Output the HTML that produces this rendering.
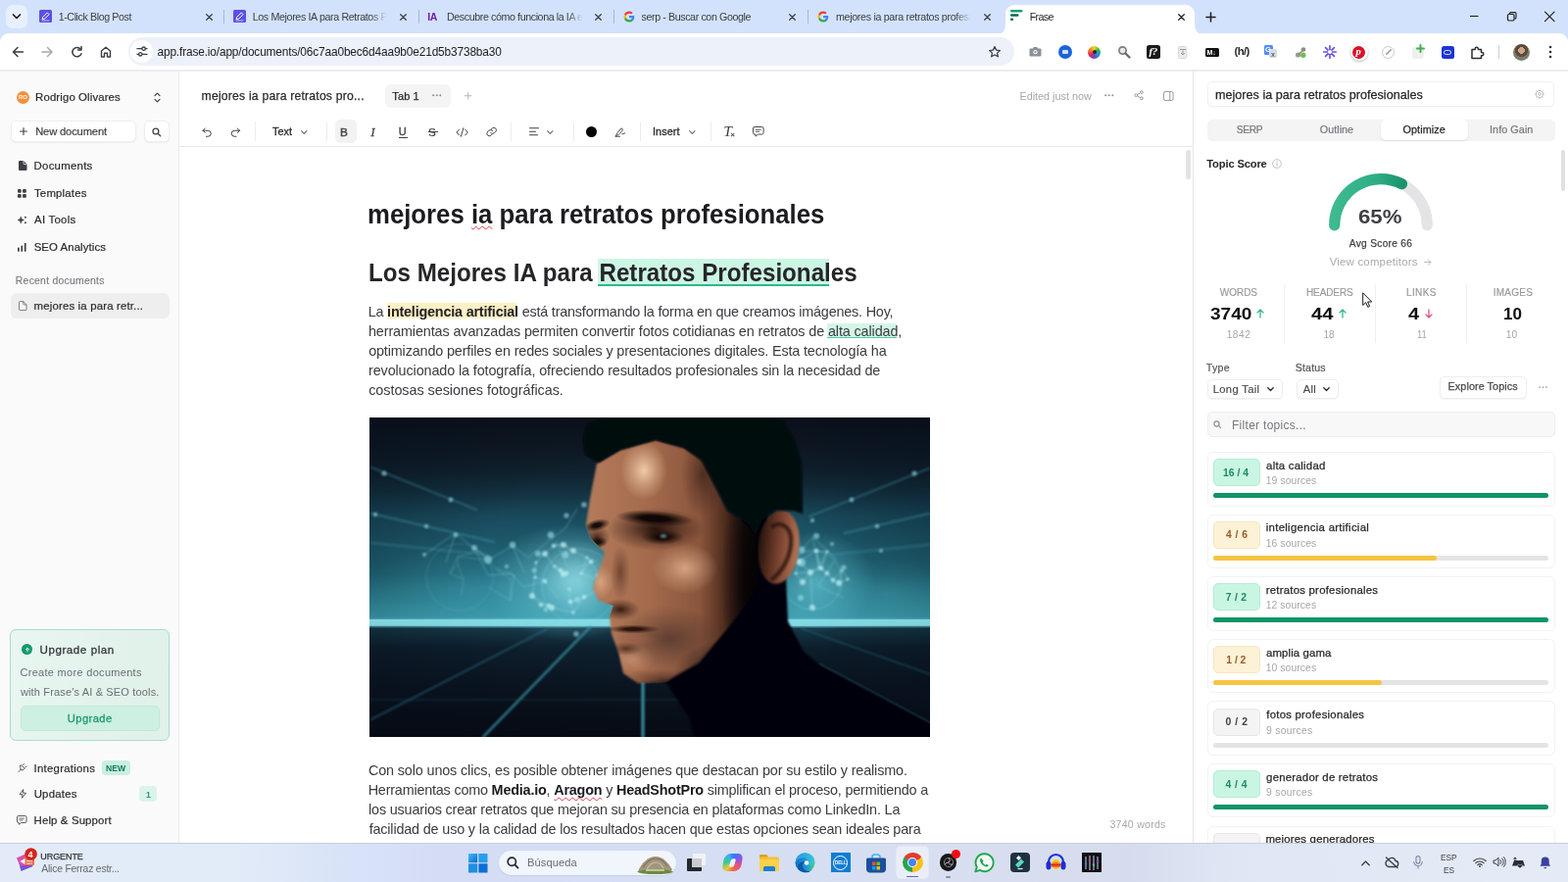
<!DOCTYPE html>
<html lang="es">
<head>
<meta charset="utf-8">
<title>Frase</title>
<style>

*{box-sizing:border-box;margin:0;padding:0}
html,body{width:1600px;height:900px;overflow:hidden;background:#fff}
body{font-family:"Liberation Sans",sans-serif;color:#27272a;position:relative}
#w{position:absolute;left:0;top:0;width:1600px;height:900px;overflow:hidden;will-change:transform;background:#fff}
.a{position:absolute}
.t{position:absolute;white-space:nowrap;line-height:1}
svg{position:absolute;overflow:visible}
b{font-weight:700}
/* browser chrome */
#tabstrip{left:0;top:0;width:1600px;height:46px;background:#d3e2fc}
#toolbar{left:0;top:34px;width:1600px;height:38px;background:#fff;border-radius:9px 9px 0 0}
#chromeline{left:0;top:71px;width:1600px;height:2px;background:#ededf0}
#omni{left:131px;top:38px;width:904px;height:29px;border-radius:15px;background:#edf1fa}
#acttab{left:1026px;top:5px;width:193px;height:30px;background:#fff;border-radius:9px 9px 0 0}
.tsep{position:absolute;width:1px;height:14px;top:10px;background:#a8b6d2}
.ext{position:absolute;width:14px;height:14px;top:46px;border-radius:3px}
/* app */
#sidebar{left:0;top:73px;width:183px;height:787px;background:#fafafa}
#sideline{left:182px;top:73px;width:1px;height:787px;background:#ececed}
#panelline{left:1217px;top:73px;width:1px;height:787px;background:#e6e6e8}
.btn{position:absolute;background:#fff;border:1px solid #eeeef0;border-radius:5px;box-shadow:0 1px 1.5px rgba(0,0,0,.05)}
.vsep{position:absolute;width:1px;background:#ededee}
.hl-g{background:#ccf6e4;box-shadow:inset 0 -2px 0 #2db88c}
.hl-g1{background:#d3f6e7;box-shadow:inset 0 -1px 0 #55c7a0}
.hl-y{background:#fdf0c5}
.sq{text-decoration:underline wavy #e23b4e 1px;text-underline-offset:2px;text-decoration-skip-ink:none}
/* panel */
.card{position:absolute;left:1231.6px;width:355.3px;height:55.6px;border:1px solid #f2f2f3;border-radius:6px;background:#fff}
.badge{position:absolute;left:1238px;width:48px;height:28px;border-radius:5px}
.bg-g{background:#c9f6e2;border:1px solid #b4ebd3}
.bg-y{background:#fdf2d6;border:1px solid #f5e5bd}
.bg-n{background:#f4f4f5;border:1px solid #e6e6e8}
.bar{position:absolute;left:1238px;width:342px;height:5px;border-radius:3px;background:#e4e4e6}
.bar i{position:absolute;left:0;top:0;height:5px;border-radius:3px;display:block}
/* taskbar */
#taskbar{left:0;top:860px;width:1600px;height:40px;background:linear-gradient(90deg,#e3ebf8 0%,#e2ebf8 15%,#d9e3f8 22%,#d4ddf5 28%,#d6def3 45%,#d8dff1 60%,#d6dcee 72%,#e0e7f4 79%,#e5ebf6 100%);border-top:1px solid #c6cede}

</style>
</head>
<body>
<div id="w">
<div id="tabstrip" class="a"></div>
<div id="toolbar" class="a"></div>
<div id="chromeline" class="a"></div>
<div id="acttab" class="a"></div>
<svg class="a" style="left:1016px;top:25px" width="213" height="10" viewBox="0 0 213 10"><path d="M0 10 Q10 10 10 0 V10Z" fill="#fff"/><path d="M213 10 Q203 10 203 0 V10Z" fill="#fff"/></svg>
<div id="omni" class="a"></div>
<div class="a" style="left:6px;top:5px;width:22px;height:24px;border-radius:7px;background:#e8effd"></div>
<svg style="left:12px;top:13px" width="10" height="8" viewBox="0 0 10 8"><path d="M1.5 2l3.5 3.5L8.5 2" fill="none" stroke="#1f1f1f" stroke-width="1.7" stroke-linecap="round" stroke-linejoin="round"/></svg>
<svg style="left:40px;top:10px" width="13" height="13" viewBox="0 0 13 13"><rect width="13" height="13" rx="1.500" fill="#5b50e6"/><path d="M3.200 9.800l.500-2.300 4.600-4.600 1.800 1.800-4.600 4.600z" fill="none" stroke="#fff" stroke-width="1"/><path d="M2.500 11h8" stroke="#cfcaff" stroke-width=".9"/></svg>
<span class="t" style="left:59.70px;top:12px;font-size:10.7px;color:#3a3d44;letter-spacing:-0.416px;">1-Click Blog Post</span>
<svg style="left:209.5px;top:13.5px" width="7" height="7" viewBox="0 0 7 7"><path d="M.7.700l5.600 5.600M6.300.700L.7 6.300" stroke="#3a3d44" stroke-width="1.250" stroke-linecap="round"/></svg>
<div class="tsep" style="left:228px"></div>
<svg style="left:238px;top:10px" width="13" height="13" viewBox="0 0 13 13"><rect width="13" height="13" rx="1.500" fill="#5b50e6"/><path d="M3.200 9.800l.500-2.300 4.600-4.600 1.800 1.800-4.600 4.600z" fill="none" stroke="#fff" stroke-width="1"/><path d="M2.500 11h8" stroke="#cfcaff" stroke-width=".9"/></svg>
<span class="t" style="left:257.69px;top:12px;font-size:10.7px;color:#3a3d44;letter-spacing:-0.364px;-webkit-mask-image:linear-gradient(90deg,#000 88%,transparent 100%);">Los Mejores IA para Retratos P</span>
<svg style="left:407.5px;top:13.5px" width="7" height="7" viewBox="0 0 7 7"><path d="M.7.700l5.600 5.600M6.300.700L.7 6.300" stroke="#3a3d44" stroke-width="1.250" stroke-linecap="round"/></svg>
<div class="tsep" style="left:427px"></div>
<span class="t" style="left:436.33px;top:12px;font-size:10.5px;color:#6a1fb0;letter-spacing:-.6px;"><b>IA</b></span>
<span class="t" style="left:456.00px;top:12px;font-size:10.7px;color:#3a3d44;letter-spacing:-0.410px;-webkit-mask-image:linear-gradient(90deg,#000 88%,transparent 100%);">Descubre cómo funciona la IA e</span>
<svg style="left:606.5px;top:13.5px" width="7" height="7" viewBox="0 0 7 7"><path d="M.7.700l5.600 5.600M6.300.700L.7 6.300" stroke="#3a3d44" stroke-width="1.250" stroke-linecap="round"/></svg>
<div class="tsep" style="left:626px"></div>
<svg style="left:636px;top:11px" width="12" height="12" viewBox="0 0 48 48"><path fill="#4285f4" d="M45.100 24.500c0-1.600-.1-3.100-.4-4.500H24v8.500h11.800c-.5 2.800-2.100 5.100-4.400 6.700v5.500h7.100c4.200-3.800 6.600-9.500 6.600-16.200z"/><path fill="#34a853" d="M24 46c5.900 0 10.900-2 14.500-5.300l-7.100-5.500c-2 1.300-4.500 2.100-7.400 2.100-5.700 0-10.500-3.800-12.300-9H4.400v5.700C8 41.100 15.400 46 24 46z"/><path fill="#fbbc05" d="M11.700 28.300c-.4-1.300-.7-2.800-.7-4.300s.3-2.900.7-4.300V14H4.400C2.900 17 2 20.400 2 24s.9 7 2.400 10z"/><path fill="#ea4335" d="M24 10.700c3.200 0 6.100 1.100 8.400 3.300l6.300-6.300C34.900 4.200 29.900 2 24 2 15.400 2 8 6.900 4.400 14l7.300 5.700c1.800-5.200 6.600-9 12.300-9z"/></svg>
<span class="t" style="left:654.49px;top:12px;font-size:10.7px;color:#3a3d44;letter-spacing:-0.401px;">serp - Buscar con Google</span>
<svg style="left:804.5px;top:13.5px" width="7" height="7" viewBox="0 0 7 7"><path d="M.7.700l5.600 5.600M6.300.700L.7 6.300" stroke="#3a3d44" stroke-width="1.250" stroke-linecap="round"/></svg>
<div class="tsep" style="left:824px"></div>
<svg style="left:834px;top:11px" width="12" height="12" viewBox="0 0 48 48"><path fill="#4285f4" d="M45.100 24.500c0-1.600-.1-3.100-.4-4.500H24v8.500h11.800c-.5 2.800-2.100 5.100-4.400 6.700v5.500h7.100c4.200-3.800 6.600-9.500 6.600-16.200z"/><path fill="#34a853" d="M24 46c5.900 0 10.900-2 14.500-5.300l-7.100-5.500c-2 1.300-4.500 2.100-7.400 2.100-5.700 0-10.500-3.800-12.300-9H4.400v5.700C8 41.100 15.400 46 24 46z"/><path fill="#fbbc05" d="M11.700 28.300c-.4-1.300-.7-2.800-.7-4.300s.3-2.900.7-4.300V14H4.400C2.900 17 2 20.400 2 24s.9 7 2.400 10z"/><path fill="#ea4335" d="M24 10.700c3.200 0 6.100 1.100 8.400 3.300l6.300-6.300C34.900 4.200 29.900 2 24 2 15.400 2 8 6.900 4.400 14l7.300 5.700c1.800-5.200 6.600-9 12.300-9z"/></svg>
<span class="t" style="left:852.95px;top:12px;font-size:10.7px;color:#3a3d44;letter-spacing:-0.317px;-webkit-mask-image:linear-gradient(90deg,#000 88%,transparent 100%);">mejores ia para retratos profesi</span>
<svg style="left:1003.5px;top:13.5px" width="7" height="7" viewBox="0 0 7 7"><path d="M.7.700l5.600 5.600M6.300.700L.7 6.300" stroke="#3a3d44" stroke-width="1.250" stroke-linecap="round"/></svg>
<svg style="left:1031px;top:10px" width="13" height="12" viewBox="0 0 13 12"><rect x="0" y="0" width="12.5" height="2.6" rx="1" fill="#12a06f"/><rect x="0" y="4.2" width="8.5" height="2.6" rx="1" fill="#0d6b4c"/><rect x="0" y="8.6" width="3" height="2.4" rx="1" fill="#0d6b4c"/></svg>
<span class="t" style="left:1050.69px;top:12px;font-size:10.7px;color:#1f1f1f;letter-spacing:-0.659px;">Frase</span>
<svg style="left:1201.5px;top:13.5px" width="7" height="7" viewBox="0 0 7 7"><path d="M.7.700l5.600 5.600M6.300.700L.7 6.300" stroke="#1f1f1f" stroke-width="1.250" stroke-linecap="round"/></svg>
<svg style="left:1229.5px;top:11.5px" width="11" height="11" viewBox="0 0 11 11"><path d="M5.5 1v9M1 5.5h9" stroke="#1f1f1f" stroke-width="1.5" stroke-linecap="round"/></svg>
<svg style="left:1499px;top:11px" width="92" height="12" viewBox="0 0 92 12"><path d="M1 5.5h8.5" stroke="#1f1f1f" stroke-width="1.1"/><rect x="39.5" y="3.5" width="6.5" height="6.5" rx="1.3" fill="none" stroke="#1f1f1f" stroke-width="1.2"/><path d="M41.5 3V2.6a1 1 0 011-1h4.5a1 1 0 011 1v4.5a1 1 0 01-1 1h-.4" fill="none" stroke="#1f1f1f" stroke-width="1.1"/><path d="M77.5 1.2l9.5 9.5M87 1.2l-9.5 9.5" stroke="#1f1f1f" stroke-width="1.2" stroke-linecap="round"/></svg>
<svg style="left:12px;top:46px" width="110" height="14" viewBox="0 0 110 14"><path d="M11.5 7H1.8M6 2.5L1.5 7 6 11.5" fill="none" stroke="#3a3d44" stroke-width="1.5" stroke-linecap="round" stroke-linejoin="round"/><path d="M31 7h9.7M36.5 2.5L41 7l-4.500 4.500" fill="none" stroke="#a5a9b2" stroke-width="1.5" stroke-linecap="round" stroke-linejoin="round"/><path d="M70.3 4.2A4.700 4.700 0 1071 8.800" fill="none" stroke="#3a3d44" stroke-width="1.5" stroke-linecap="round"/><path d="M71 1.5V5h-3.500" fill="none" stroke="#3a3d44" stroke-width="1.5" stroke-linecap="round" stroke-linejoin="round"/><path d="M91.500 12V6L96 2.300 100.500 6v6h-3V8.200h-3V12z" fill="none" stroke="#3a3d44" stroke-width="1.4" stroke-linejoin="round"/></svg>
<div class="a" style="left:133px;top:41px;width:23px;height:23px;border-radius:12px;background:#fff"></div>
<svg style="left:138.500px;top:47px" width="12" height="11" viewBox="0 0 12 11"><path d="M1 2.700h4.500M9.500 2.700H11M1 8.300h1.500M6.500 8.300H11" stroke="#3a3d44" stroke-width="1.300" stroke-linecap="round"/><circle cx="7.600" cy="2.700" r="1.700" fill="none" stroke="#3a3d44" stroke-width="1.300"/><circle cx="4.300" cy="8.300" r="1.700" fill="none" stroke="#3a3d44" stroke-width="1.300"/></svg>
<span class="t" style="left:160.51px;top:48px;font-size:11.9px;color:#202124;letter-spacing:-0.155px;">app.frase.io/app/documents/06c7aa0bec6d4aa9b0e21d5b3738ba30</span>
<svg style="left:1008px;top:45.500px" width="14" height="14" viewBox="0 0 24 24"><path d="M12 2.800l2.800 6 6.500.700-4.900 4.400 1.400 6.400L12 17l-5.800 3.300 1.400-6.400L2.700 9.500l6.500-.700z" fill="none" stroke="#3a3d44" stroke-width="2.100" stroke-linejoin="round"/></svg>
<svg style="left:1050px;top:47px" width="13" height="11" viewBox="0 0 13 11"><path d="M1.500 2.500h2.300l1-1.500h3.400l1 1.500h2.300a1 1 0 011 1V9.500a1 1 0 01-1 1H1.500a1 1 0 01-1-1V3.500a1 1 0 011-1z" fill="#8d9096"/><circle cx="6.500" cy="6.200" r="2.100" fill="#fff"/><circle cx="6.500" cy="6.200" r="1.100" fill="#8d9096"/></svg>
<div class="a" style="left:1079.500px;top:46px;width:14px;height:14px;border-radius:7px;background:#1d63d9"></div><div class="a" style="left:1083.500px;top:51px;width:6px;height:4px;border-radius:1px;background:#cfe0ff"></div>
<div class="a" style="left:1110px;top:46.500px;width:13px;height:13px;border-radius:7px;background:conic-gradient(#f5d21f,#38b24a,#1c9ad6,#7a3fc0,#e0245e,#f0801f,#f5d21f)"></div><div class="a" style="left:1114.500px;top:51px;width:4px;height:4px;border-radius:2px;background:#2a2a2a"></div>
<svg style="left:1140px;top:46px" width="14" height="14" viewBox="0 0 14 14"><circle cx="5.500" cy="5.500" r="3.600" fill="#e9e9e9" stroke="#7d7d7d" stroke-width="1.700"/><path d="M8.500 8.500l4 4" stroke="#6a6a6a" stroke-width="2.300" stroke-linecap="round"/></svg>
<div class="a" style="left:1170px;top:46px;width:14px;height:14px;border-radius:2.500px;background:#1b1b1b"></div>
<span class="t" style="left:1172.500px;top:47px;font-size:11px;color:#fff;font-style:italic;font-weight:700;font-family:'Liberation Serif',serif;letter-spacing:-.5px">f?</span>
<div class="a" style="left:1202px;top:46.500px;width:9px;height:13px;border-radius:1.500px;background:#ececec;border:1px solid #d9d9d9"></div><svg style="left:1203.500px;top:49.500px" width="6" height="7" viewBox="0 0 6 7"><path d="M0 .500h6M3 1.500v4M1 4l2 2 2-2" fill="none" stroke="#9a9a9a" stroke-width="1"/></svg>
<div class="a" style="left:1230px;top:49px;width:14px;height:8.500px;border-radius:1.500px;background:#111"></div>
<span class="t" style="left:1231.500px;top:50px;font-size:7px;color:#fff;font-weight:700;letter-spacing:-.2px">M↓</span>
<span class="t" style="left:1259.500px;top:46.500px;font-size:11.500px;color:#2f3136;font-weight:700;letter-spacing:-.7px">(h/)</span>
<div class="a" style="left:1289.500px;top:46px;width:9px;height:10px;border-radius:1.500px;background:#4d8df6"></div><div class="a" style="left:1295px;top:50px;width:8px;height:9px;border-radius:1.500px;background:#d7dbe2"></div>
<span class="t" style="left:1291px;top:47px;font-size:7.500px;color:#fff;font-weight:700">G</span><span class="t" style="left:1297px;top:51.500px;font-size:7px;color:#5b6474;font-weight:700">x</span>
<svg style="left:1321px;top:47px" width="13" height="13" viewBox="0 0 13 13"><circle cx="3.500" cy="9" r="2.600" fill="#9b9b9b"/><circle cx="9" cy="3.500" r="2.300" fill="#8a8a8a"/><path d="M4 8.500L9 4" stroke="#8a8a8a" stroke-width="1.500"/><circle cx="8.800" cy="9.200" r="2.700" fill="#6cc04a"/></svg>
<svg style="left:1350px;top:46px" width="14" height="14" viewBox="0 0 14 14"><g stroke="#6b4de0" stroke-width="1.700" stroke-linecap="round"><path d="M7 .800v12.400M.8 7h12.400M2.600 2.600l8.800 8.800M11.400 2.600l-8.800 8.800"/></g><circle cx="7" cy="7" r="2.100" fill="#fff"/></svg>
<div class="a" style="left:1377.500px;top:44px;width:18px;height:18px;border-radius:9px;background:#fff;box-shadow:0 1px 2.500px rgba(0,0,0,.28)"></div><div class="a" style="left:1380px;top:46.500px;width:13px;height:13px;border-radius:7px;background:#d8132b"></div>
<span class="t" style="left:1383.500px;top:47.500px;font-size:10.500px;color:#fff;font-weight:700;font-style:italic;font-family:'Liberation Serif',serif">p</span>
<div class="a" style="left:1410px;top:46.500px;width:13px;height:13px;border-radius:7px;border:1.300px solid #c9c9c9;background:#fff"></div><svg style="left:1413.500px;top:50px" width="6" height="6" viewBox="0 0 6 6"><path d="M.8 5.200L5.200.800" stroke="#a7a7a7" stroke-width="1.800" stroke-linecap="round"/></svg>
<div class="a" style="left:1441px;top:47.500px;width:12px;height:12px;border-radius:3px;background:#eef0f0"></div><svg style="left:1444.500px;top:44.500px" width="9" height="9" viewBox="0 0 9 9"><path d="M4.500 1v7M1 4.500h7" stroke="#3fb24f" stroke-width="2" stroke-linecap="round"/></svg>
<div class="a" style="left:1470.500px;top:46.500px;width:13px;height:13px;border-radius:2.500px;background:#1c35d6"></div><div class="a" style="left:1473px;top:50.500px;width:8px;height:5px;border-radius:2.500px;border:1.200px solid #dfe4ff"></div>
<svg style="left:1500px;top:45.500px" width="15" height="15" viewBox="0 0 15 15"><path d="M2 4.500h3.200v-.700a1.600 1.600 0 013.200 0v.700h3.100v3.100h.700a1.600 1.600 0 010 3.200h-.700V13.500H2z" fill="none" stroke="#2a2d33" stroke-width="1.500" stroke-linejoin="round"/></svg>
<div class="a" style="left:1529px;top:46px;width:1px;height:14px;background:#c3d0ea"></div>
<div class="a" style="left:1543.500px;top:44.500px;width:17px;height:17px;border-radius:9px;background:radial-gradient(circle at 50% 38%,#c9a58c 0 24%,#5e4a3d 25% 48%,#7a7f6a 49% 100%)"></div>
<svg style="left:1580px;top:46px" width="4" height="14" viewBox="0 0 4 14"><circle cx="2" cy="2" r="1.300" fill="#2a2d33"/><circle cx="2" cy="7" r="1.300" fill="#2a2d33"/><circle cx="2" cy="12" r="1.300" fill="#2a2d33"/></svg>
<div id="sidebar" class="a"></div>
<div id="sideline" class="a"></div>
<div class="a" style="left:16.800px;top:92.600px;width:13.200px;height:13.200px;border-radius:7px;background:#f2903c"></div>
<span class="t" style="left:19.07px;top:96px;font-size:6px;color:#fff3e6;font-weight:700;letter-spacing:-0.046px;">RO</span>
<span class="t" style="left:36.11px;top:94px;font-size:11.4px;color:#2b2b2f;letter-spacing:0.120px;-webkit-text-stroke:.2px #2b2b2f;">Rodrigo Olivares</span>
<svg style="left:156.500px;top:94px" width="7" height="11" viewBox="0 0 7 11"><path d="M1 3.700L3.500 1.200 6 3.700M1 7.300l2.500 2.500L6 7.300" fill="none" stroke="#3f3f46" stroke-width="1.200" stroke-linecap="round" stroke-linejoin="round"/></svg>
<div class="btn" style="left:11px;top:123px;width:127.500px;height:22px"></div>
<div class="btn" style="left:146.500px;top:123px;width:26px;height:22px"></div>
<svg style="left:20px;top:130.200px" width="8" height="8" viewBox="0 0 8 8"><path d="M4 .500v7M.5 4h7" stroke="#3f3f46" stroke-width="1.100" stroke-linecap="round"/></svg>
<span class="t" style="left:36.15px;top:129px;font-size:11.2px;color:#3f3f46;letter-spacing:-0.152px;-webkit-text-stroke:.2px #3f3f46;">New document</span>
<svg style="left:154.5px;top:129.5px" width="9.5" height="9.5" viewBox="0 0 12 12"><circle cx="5" cy="5" r="3.700" fill="none" stroke="#3f3f46" stroke-width="1.64211"/><path d="M7.800 7.800L11 11" stroke="#3f3f46" stroke-width="1.64211" stroke-linecap="round"/></svg>
<span class="t" style="left:34.58px;top:164px;font-size:11.4px;color:#2b2b2f;letter-spacing:0.259px;-webkit-text-stroke:.2px #2b2b2f;">Documents</span>
<span class="t" style="left:34.99px;top:192px;font-size:11.4px;color:#2b2b2f;letter-spacing:0.192px;-webkit-text-stroke:.2px #2b2b2f;">Templates</span>
<span class="t" style="left:35.11px;top:219px;font-size:11.4px;color:#2b2b2f;letter-spacing:0.248px;-webkit-text-stroke:.2px #2b2b2f;">AI Tools</span>
<span class="t" style="left:34.67px;top:247px;font-size:11.4px;color:#2b2b2f;letter-spacing:0.086px;-webkit-text-stroke:.2px #2b2b2f;">SEO Analytics</span>
<svg style="left:18.500px;top:164.200px" width="8.500" height="10.200" viewBox="0 0 17 20"><path d="M2 0h8l7 7v11a2 2 0 01-2 2H2a2 2 0 01-2-2V2a2 2 0 012-2z" fill="#3f3f46"/><path d="M10 0v5a2 2 0 002 2h5" fill="none" stroke="#fafafa" stroke-width="1.600"/></svg>
<svg style="left:18.200px;top:192.600px" width="8.800" height="8.800" viewBox="0 0 18 18"><rect x="0" y="0" width="7.600" height="7.600" rx="1.800" fill="#3f3f46"/><rect x="10.400" y="0" width="7.600" height="7.600" rx="1.800" fill="#3f3f46"/><rect x="0" y="10.400" width="7.600" height="7.600" rx="1.800" fill="#3f3f46"/><rect x="10.400" y="10.400" width="7.600" height="7.600" rx="1.800" fill="#3f3f46"/></svg>
<svg style="left:18px;top:220px" width="9" height="9" viewBox="0 0 18 18"><path d="M6.500 2C7.200 6.300 8.300 7.800 13 9 8.300 10.200 7.200 11.700 6.500 16 5.800 11.700 4.700 10.200 0 9 4.700 7.800 5.800 6.300 6.500 2z" fill="#3f3f46" stroke="#3f3f46" stroke-width="1.200" stroke-linejoin="round"/><circle cx="15.800" cy="3.600" r="1.900" fill="#3f3f46"/><circle cx="15.800" cy="14.600" r="1.900" fill="#3f3f46"/></svg>
<svg style="left:18.200px;top:247.600px" width="8.800" height="8.800" viewBox="0 0 18 18"><rect x="0" y="9" width="3.600" height="9" rx="1" fill="#3f3f46"/><rect x="7" y="5" width="3.600" height="13" rx="1" fill="#3f3f46"/><rect x="14" y="0" width="3.600" height="18" rx="1" fill="#3f3f46"/></svg>
<span class="t" style="left:15.84px;top:282px;font-size:10.4px;color:#7b7b82;letter-spacing:0.260px;-webkit-text-stroke:.15px #7b7b82;">Recent documents</span>
<div class="a" style="left:10.500px;top:298.500px;width:162.600px;height:26px;border-radius:6px;background:#eeeeef"></div>
<svg style="left:18.500px;top:306.800px" width="8.500" height="10.200" viewBox="0 0 17 20"><path d="M2.500 1h7l6.500 6.500v10a1.500 1.500 0 01-1.500 1.500h-12A1.500 1.500 0 011 17.500v-15A1.500 1.500 0 012.500 1z" fill="#f6f6f6" stroke="#77777d" stroke-width="1.900"/><path d="M9.500 1v5a1.500 1.500 0 001.500 1.500h5" fill="none" stroke="#77777d" stroke-width="1.900"/></svg>
<span class="t" style="left:34.59px;top:307px;font-size:11.4px;color:#2b2b2f;letter-spacing:0.170px;-webkit-text-stroke:.2px #2b2b2f;">mejores ia para retr...</span>
<div class="a" style="left:10.300px;top:641.600px;width:163.200px;height:114.600px;border-radius:6px;border:1px solid #a9dccb;background:linear-gradient(100deg,#e9f6f1 0%,#e3f3ec 55%,#dff1e9 100%)"></div>
<div class="a" style="left:21.900px;top:657px;width:11.300px;height:11.300px;border-radius:6px;background:#12996c"></div>
<svg style="left:24.500px;top:659.600px" width="6" height="6" viewBox="0 0 12 12"><path d="M6 10V2.500M2.500 6L6 2.500 9.500 6" fill="none" stroke="#e9fff7" stroke-width="1.900" stroke-linecap="round" stroke-linejoin="round"/></svg>
<span class="t" style="left:40.49px;top:657px;font-size:11.6px;color:#34373a;letter-spacing:0.556px;-webkit-text-stroke:.3px #34373a;">Upgrade plan</span>
<span class="t" style="left:20.44px;top:681px;font-size:11px;color:#6b6f72;letter-spacing:0.301px;">Create more documents</span>
<span class="t" style="left:20.92px;top:701px;font-size:11px;color:#6b6f72;letter-spacing:0.157px;">with Frase's AI &amp; SEO tools.</span>
<div class="a" style="left:21px;top:719.500px;width:141.800px;height:26px;border-radius:5px;background:#cdf0e3;border:1px solid #bfe8d8"></div>
<span class="t" style="left:68.83px;top:728px;font-size:11.2px;color:#1b9a6c;letter-spacing:0.407px;-webkit-text-stroke:.3px #1b9a6c;">Upgrade</span>
<span class="t" style="left:34.51px;top:779px;font-size:11.4px;color:#2b2b2f;letter-spacing:0.263px;-webkit-text-stroke:.2px #2b2b2f;">Integrations</span>
<div class="a" style="left:103.500px;top:775.700px;width:29.700px;height:15.500px;border-radius:4px;background:#c9efe2"></div>
<span class="t" style="left:108.38px;top:781px;font-size:8.2px;color:#0f7a5a;font-weight:700;transform-origin:0 0;transform:scaleX(1.0531);">NEW</span>
<span class="t" style="left:34.64px;top:805px;font-size:11.4px;color:#2b2b2f;letter-spacing:0.245px;-webkit-text-stroke:.2px #2b2b2f;">Updates</span>
<div class="a" style="left:142.300px;top:802px;width:17.700px;height:15.500px;border-radius:4px;background:#dbf4eb"></div>
<span class="t" style="left:148.67px;top:806px;font-size:9.6px;color:#1f8f6c;-webkit-text-stroke:.2px #1f8f6c;">1</span>
<span class="t" style="left:34.58px;top:832px;font-size:11.4px;color:#2b2b2f;letter-spacing:0.139px;-webkit-text-stroke:.2px #2b2b2f;">Help &amp; Support</span>
<svg style="left:17.800px;top:779px" width="9.500" height="9.500" viewBox="0 0 19 19"><path d="M6.500 12.500a4 4 0 010-5.700l2.300-2.300 5.700 5.700-2.300 2.300a4 4 0 01-5.700 0zM6.500 12.500L2 17M11 3l2-2M16 8l2-2M4 6l3-3" fill="none" stroke="#4a4a50" stroke-width="1.900" stroke-linecap="round" stroke-linejoin="round"/></svg>
<svg style="left:18.500px;top:805.300px" width="8.500" height="9.800" viewBox="0 0 17 20"><path d="M9.500 1L2 11.500h6L7 19l8-10.500H9z" fill="none" stroke="#4a4a50" stroke-width="1.900" stroke-linejoin="round"/></svg>
<svg style="left:17.300px;top:832px" width="10.500" height="9.800" viewBox="0 0 21 19.500"><path d="M3.500 1h14A2.500 2.500 0 0120 3.500v9a2.500 2.500 0 01-2.500 2.500H9l-4.500 3.500V15h-1A2.500 2.500 0 011 12.500v-9A2.500 2.500 0 013.500 1z" fill="none" stroke="#4a4a50" stroke-width="1.800" stroke-linejoin="round"/><path d="M6 6.200h9M6 9.800h6" stroke="#4a4a50" stroke-width="1.600" stroke-linecap="round"/></svg>
<span class="t" style="left:205.62px;top:92px;font-size:12.2px;color:#2b2b2f;letter-spacing:0.202px;-webkit-text-stroke:.25px #2b2b2f;">mejores ia para retratos pro...</span>
<div class="a" style="left:393px;top:86px;width:67px;height:23.500px;border-radius:6px;background:#f4f4f5"></div>
<span class="t" style="left:400.36px;top:93px;font-size:11px;color:#2b2b2f;letter-spacing:0.079px;-webkit-text-stroke:.25px #2b2b2f;">Tab 1</span>
<svg style="left:441.2px;top:96.2px" width="9.500" height="2.400" viewBox="0 0 9.500 2.400"><circle cx="1.200" cy="1.200" r="1" fill="#8a8a90"/><circle cx="4.750" cy="1.200" r="1" fill="#8a8a90"/><circle cx="8.300" cy="1.200" r="1" fill="#8a8a90"/></svg>
<svg style="left:473.500px;top:93.700px" width="7.500" height="7.500" viewBox="0 0 8 8"><path d="M4 .500v7M.5 4h7" stroke="#b5b5ba" stroke-width="1.100" stroke-linecap="round"/></svg>
<span class="t" style="left:1040.47px;top:93px;font-size:10.8px;color:#a6a6ab;letter-spacing:0.006px;">Edited just now</span>
<svg style="left:1127px;top:96.2px" width="9.500" height="2.400" viewBox="0 0 9.500 2.400"><circle cx="1.200" cy="1.200" r="1" fill="#8f8f95"/><circle cx="4.750" cy="1.200" r="1" fill="#8f8f95"/><circle cx="8.300" cy="1.200" r="1" fill="#8f8f95"/></svg>
<svg style="left:1156.500px;top:92.300px" width="10.200" height="10.400" viewBox="0 0 20 20"><circle cx="15.500" cy="4" r="2.700" fill="none" stroke="#8f8f95" stroke-width="1.700"/><circle cx="4.500" cy="10" r="2.700" fill="none" stroke="#8f8f95" stroke-width="1.700"/><circle cx="15.500" cy="16" r="2.700" fill="none" stroke="#8f8f95" stroke-width="1.700"/><path d="M7 8.700l6-3.300M7 11.300l6 3.300" stroke="#8f8f95" stroke-width="1.700"/></svg>
<svg style="left:1186.500px;top:92.500px" width="10.500" height="10" viewBox="0 0 21 20"><rect x="1" y="1" width="19" height="18" rx="3" fill="none" stroke="#8f8f95" stroke-width="1.800"/><path d="M13.500 1v18" stroke="#8f8f95" stroke-width="1.800"/></svg>
<div class="a" style="left:183px;top:149px;width:1034px;height:1px;background:#e9e9eb"></div>
<div class="vsep" style="left:260px;top:124px;height:19.500px"></div>
<div class="vsep" style="left:332.9px;top:124px;height:19.500px"></div>
<div class="vsep" style="left:520.6px;top:124px;height:19.500px"></div>
<div class="vsep" style="left:585.1px;top:124px;height:19.500px"></div>
<div class="vsep" style="left:652.8px;top:124px;height:19.500px"></div>
<div class="vsep" style="left:725.4px;top:124px;height:19.500px"></div>
<svg style="left:206px;top:129.800px" width="10.500" height="9.500" viewBox="0 0 21 19"><path d="M6.500 2L2 6.500 6.500 11M2 6.500h10.500a6 6 0 010 12H9" fill="none" stroke="#3f3f46" stroke-width="2" stroke-linecap="round" stroke-linejoin="round"/></svg>
<svg style="left:235.300px;top:129.800px" width="10.500" height="9.500" viewBox="0 0 21 19"><path d="M14.500 2L19 6.500 14.500 11M19 6.500H8.500a6 6 0 000 12H12" fill="none" stroke="#3f3f46" stroke-width="2" stroke-linecap="round" stroke-linejoin="round"/></svg>
<span class="t" style="left:277.98px;top:129px;font-size:10.8px;color:#2b2b2f;letter-spacing:0.114px;-webkit-text-stroke:.3px #2b2b2f;">Text</span>
<svg style="left:306.8px;top:132.6px" width="6.600" height="4" viewBox="0 0 6.600 4"><path d="M.6.600l2.700 2.700L6 .600" fill="none" stroke="#6a6a70" stroke-width="1.100" stroke-linecap="round" stroke-linejoin="round"/></svg>
<div class="a" style="left:341.500px;top:122.400px;width:22px;height:23.200px;border-radius:5px;background:#f2f2f3"></div>
<span class="t" style="left:346.94px;top:130px;font-size:11.8px;color:#46464c;-webkit-text-stroke:.45px #46464c;">B</span>
<span class="t" style="left:378.56px;top:130px;font-size:11.8px;color:#3f3f46;font-family:'Liberation Serif',serif;-webkit-text-stroke:.3px #3f3f46;"><i>I</i></span>
<span class="t" style="left:406.85px;top:129px;font-size:11px;color:#3f3f46;-webkit-text-stroke:.3px #3f3f46;">U</span>
<div class="a" style="left:407.300px;top:140px;width:8.600px;height:1px;background:#3f3f46"></div>
<span class="t" style="left:437.03px;top:129px;font-size:11.6px;color:#3f3f46;-webkit-text-stroke:.2px #3f3f46;">S</span>
<div class="a" style="left:436.500px;top:134px;width:10.200px;height:1px;background:#3f3f46"></div>
<svg style="left:465.200px;top:129.500px" width="13.200" height="10" viewBox="0 0 26 20"><path d="M7 4L1.500 10 7 16M19 4l5.500 6L19 16M15.500 1.500l-5 17" fill="none" stroke="#3f3f46" stroke-width="2" stroke-linecap="round" stroke-linejoin="round"/></svg>
<svg style="left:495.600px;top:129px" width="11.300" height="11" viewBox="0 0 22 22"><path d="M9 13a5 5 0 007.500.5l3-3a5 5 0 00-7-7l-1.700 1.700M13 9a5 5 0 00-7.500-.5l-3 3a5 5 0 007 7l1.700-1.700" fill="none" stroke="#3f3f46" stroke-width="2" stroke-linecap="round"/></svg>
<svg style="left:539.800px;top:130px" width="10" height="8.500" viewBox="0 0 20 17"><path d="M1 1.500h18M1 8.500h12M1 15.500h16" stroke="#3f3f46" stroke-width="2" stroke-linecap="round"/></svg>
<svg style="left:558.3px;top:132.6px" width="6.600" height="4" viewBox="0 0 6.600 4"><path d="M.6.600l2.700 2.700L6 .600" fill="none" stroke="#6a6a70" stroke-width="1.100" stroke-linecap="round" stroke-linejoin="round"/></svg>
<div class="a" style="left:597.800px;top:128.800px;width:10.900px;height:10.900px;border-radius:6px;background:#050505"></div>
<svg style="left:627.300px;top:129px" width="12" height="11" viewBox="0 0 24 22"><path d="M3 19c3-1 5-1 7.500-4l7-8.500-3.500-3-7 8.500C4.500 14.500 5 17 3 19zM2 20.500h9M15.500 15.500c2 .5 4 0 6-2" fill="none" stroke="#3f3f46" stroke-width="1.900" stroke-linecap="round" stroke-linejoin="round"/></svg>
<span class="t" style="left:665.95px;top:129px;font-size:10.8px;color:#2b2b2f;letter-spacing:0.115px;-webkit-text-stroke:.3px #2b2b2f;">Insert</span>
<svg style="left:702.6px;top:132.6px" width="6.600" height="4" viewBox="0 0 6.600 4"><path d="M.6.600l2.700 2.700L6 .600" fill="none" stroke="#6a6a70" stroke-width="1.100" stroke-linecap="round" stroke-linejoin="round"/></svg>
<span class="t" style="left:738.30px;top:126px;font-size:15.5px;color:#3f3f46;font-family:'Liberation Serif',serif;"><i>T</i></span>
<span class="t" style="left:745.30px;top:134px;font-size:8px;color:#3f3f46;font-weight:700;">×</span>
<svg style="left:768.300px;top:129.300px" width="11.600" height="10.600" viewBox="0 0 23 21"><path d="M4 1h15a3 3 0 013 3v9a3 3 0 01-3 3H11l-5 4v-4H4a3 3 0 01-3-3V4a3 3 0 013-3z" fill="none" stroke="#3f3f46" stroke-width="1.900" stroke-linejoin="round"/><path d="M6.500 6.500h10M6.500 10.500h7" stroke="#3f3f46" stroke-width="1.700" stroke-linecap="round"/></svg>
<div class="a" style="left:1210px;top:153px;width:4.500px;height:30px;border-radius:2.500px;background:#e3e3e5"></div>
<span class="t" style="left:375.00px;top:205px;font-size:27.4px;color:#1c1c1f;font-weight:700;transform-origin:0 0;transform:scaleX(0.9397);">mejores <span class="sq">ia</span> para retratos profesionales</span>
<div class="a hl-g" style="left:610.300px;top:263.500px;width:235.600px;height:28px"></div>
<span class="t" style="left:375.61px;top:265px;font-size:26px;color:#26262a;font-weight:700;transform-origin:0 0;transform:scaleX(0.9294);">Los Mejores IA para Retratos Profesionales</span>
<div class="a hl-y" style="left:394.800px;top:309px;width:131.800px;height:15.700px"></div>
<div class="a hl-g1" style="left:844.300px;top:329.700px;width:71px;height:15.700px"></div>
<span class="t" style="left:375.67px;top:311px;font-size:14.4px;color:#3b3b40;letter-spacing:-0.199px;">La <b style="color:#232326">inteligencia artificial</b> está transformando la forma en que creamos imágenes. Hoy,</span>
<span class="t" style="left:375.98px;top:331px;font-size:14.4px;color:#3b3b40;letter-spacing:-0.116px;">herramientas avanzadas permiten convertir fotos cotidianas en retratos de alta calidad,</span>
<span class="t" style="left:376.16px;top:351px;font-size:14.4px;color:#3b3b40;letter-spacing:-0.146px;">optimizando perfiles en redes sociales y presentaciones digitales. Esta tecnología ha</span>
<span class="t" style="left:376.02px;top:371px;font-size:14.4px;color:#3b3b40;letter-spacing:-0.117px;">revolucionado la fotografía, ofreciendo resultados profesionales sin la necesidad de</span>
<span class="t" style="left:376.16px;top:391px;font-size:14.4px;color:#3b3b40;letter-spacing:-0.043px;">costosas sesiones fotográficas.</span>
<div class="a" style="left:376.500px;top:426px;width:572px;height:326px;overflow:hidden;background:#0a1c2a"><svg style="left:0;top:0" width="572" height="326" viewBox="0 0 572 326">
<defs>
<linearGradient id="pbg" x1="0" y1="0" x2="0" y2="326" gradientUnits="userSpaceOnUse">
<stop offset="0" stop-color="#0d121d"/><stop offset=".08" stop-color="#0e1824"/><stop offset=".17" stop-color="#10222f"/><stop offset=".23" stop-color="#13303f"/>
<stop offset=".31" stop-color="#194a5c"/><stop offset=".4" stop-color="#1d5a6c"/><stop offset=".49" stop-color="#216a7c"/><stop offset=".57" stop-color="#2a7f90"/><stop offset=".626" stop-color="#3792a4"/>
<stop offset=".634" stop-color="#7fd5df"/><stop offset=".651" stop-color="#79cfd9"/><stop offset=".66" stop-color="#163a4a"/>
<stop offset=".72" stop-color="#0e202e"/><stop offset=".85" stop-color="#0b1521"/><stop offset="1" stop-color="#080c15"/>
</linearGradient>
<radialGradient id="pvig" cx="286" cy="150" r="340" gradientUnits="userSpaceOnUse" gradientTransform="translate(0 60) scale(1 .6)">
<stop offset=".5" stop-color="#000" stop-opacity="0"/><stop offset="1" stop-color="#000814" stop-opacity=".3"/>
</radialGradient>
<linearGradient id="pskin" x1="225" y1="0" x2="400" y2="0" gradientUnits="userSpaceOnUse">
<stop offset="0" stop-color="#b27a5a"/><stop offset=".35" stop-color="#a36a4c"/><stop offset=".64" stop-color="#8a553c"/>
<stop offset=".79" stop-color="#4d2c1d"/><stop offset=".9" stop-color="#1a0e0b"/><stop offset="1" stop-color="#0a0607"/>
</linearGradient>
<linearGradient id="pear" x1="395" y1="0" x2="440" y2="0" gradientUnits="userSpaceOnUse">
<stop offset="0" stop-color="#1f0f0b"/><stop offset=".45" stop-color="#6e3c2a"/><stop offset=".8" stop-color="#a26247"/><stop offset="1" stop-color="#b97a5a"/>
</linearGradient>
<filter id="pb1" x="-20%" y="-20%" width="140%" height="140%"><feGaussianBlur stdDeviation="1.200"/></filter>
<filter id="pb3" x="-30%" y="-30%" width="160%" height="160%"><feGaussianBlur stdDeviation="3"/></filter>
<linearGradient id="pband" x1="0" y1="0" x2="0" y2="1"><stop offset="0" stop-color="#3ea2b4" stop-opacity="0"/><stop offset="1" stop-color="#43a8ba" stop-opacity=".38"/></linearGradient>
<clipPath id="pfc"><path d="M232 47L256 33L292 23L321 31L339 43L354 72L365 94L386 109L394 120L396 170L386 188L364 217L336 250L303 269L274 271L259 261L254 239L247 221L245 203L249 192L234 187L228 174L234 156L240 138L226 123L221 109L225 83Z"/></clipPath>
<radialGradient id="pg1"><stop offset="0" stop-color="#7fd8e6" stop-opacity="0.7"/><stop offset="0.5" stop-color="#7fd8e6" stop-opacity="0.315"/><stop offset="1" stop-color="#7fd8e6" stop-opacity="0"/></radialGradient>
<radialGradient id="pg2"><stop offset="0" stop-color="#a8eaf2" stop-opacity="0.5"/><stop offset="0.5" stop-color="#a8eaf2" stop-opacity="0.225"/><stop offset="1" stop-color="#a8eaf2" stop-opacity="0"/></radialGradient>
<radialGradient id="pg3"><stop offset="0" stop-color="#4fb4c8" stop-opacity="0.22"/><stop offset="0.5" stop-color="#4fb4c8" stop-opacity="0.099"/><stop offset="1" stop-color="#4fb4c8" stop-opacity="0"/></radialGradient>
<radialGradient id="pg4"><stop offset="0" stop-color="#6fcfde" stop-opacity="0.6"/><stop offset="0.5" stop-color="#6fcfde" stop-opacity="0.27"/><stop offset="1" stop-color="#6fcfde" stop-opacity="0"/></radialGradient>
<radialGradient id="pg5"><stop offset="0" stop-color="#4fb4c8" stop-opacity="0.2"/><stop offset="0.5" stop-color="#4fb4c8" stop-opacity="0.09"/><stop offset="1" stop-color="#4fb4c8" stop-opacity="0"/></radialGradient>
<radialGradient id="pg6"><stop offset="0.3" stop-color="#050304" stop-opacity="1"/><stop offset="0.65" stop-color="#050304" stop-opacity="0.45"/><stop offset="1" stop-color="#050304" stop-opacity="0"/></radialGradient>
<radialGradient id="pg7"><stop offset="0.2" stop-color="#0a0605" stop-opacity="0.9"/><stop offset="0.6" stop-color="#0a0605" stop-opacity="0.405"/><stop offset="1" stop-color="#0a0605" stop-opacity="0"/></radialGradient>
<radialGradient id="pg8"><stop offset="0" stop-color="#2a1710" stop-opacity="0.6"/><stop offset="0.5" stop-color="#2a1710" stop-opacity="0.27"/><stop offset="1" stop-color="#2a1710" stop-opacity="0"/></radialGradient>
<radialGradient id="pg9"><stop offset="0" stop-color="#f3cfae" stop-opacity="0.95"/><stop offset="0.5" stop-color="#f3cfae" stop-opacity="0.4275"/><stop offset="1" stop-color="#f3cfae" stop-opacity="0"/></radialGradient>
<radialGradient id="pg10"><stop offset="0" stop-color="#e2ae8d" stop-opacity="0.85"/><stop offset="0.5" stop-color="#e2ae8d" stop-opacity="0.3825"/><stop offset="1" stop-color="#e2ae8d" stop-opacity="0"/></radialGradient>
<radialGradient id="pg11"><stop offset="0" stop-color="#e3ad8c" stop-opacity="0.8"/><stop offset="0.5" stop-color="#e3ad8c" stop-opacity="0.36"/><stop offset="1" stop-color="#e3ad8c" stop-opacity="0"/></radialGradient>
<radialGradient id="pg12"><stop offset="0" stop-color="#d49c7c" stop-opacity="0.7"/><stop offset="0.5" stop-color="#d49c7c" stop-opacity="0.315"/><stop offset="1" stop-color="#d49c7c" stop-opacity="0"/></radialGradient>
<radialGradient id="pg13"><stop offset="0" stop-color="#200e09" stop-opacity="0.95"/><stop offset="0.5" stop-color="#200e09" stop-opacity="0.4275"/><stop offset="1" stop-color="#200e09" stop-opacity="0"/></radialGradient>
<radialGradient id="pg14"><stop offset="0" stop-color="#2b140e" stop-opacity="0.75"/><stop offset="0.5" stop-color="#2b140e" stop-opacity="0.3375"/><stop offset="1" stop-color="#2b140e" stop-opacity="0"/></radialGradient>
<radialGradient id="pg15"><stop offset="0" stop-color="#4a281b" stop-opacity="0.6"/><stop offset="0.5" stop-color="#4a281b" stop-opacity="0.27"/><stop offset="1" stop-color="#4a281b" stop-opacity="0"/></radialGradient>
<radialGradient id="pg16"><stop offset="0" stop-color="#46302a" stop-opacity="0.7"/><stop offset="0.5" stop-color="#46302a" stop-opacity="0.315"/><stop offset="1" stop-color="#46302a" stop-opacity="0"/></radialGradient>
<radialGradient id="pg17"><stop offset="0" stop-color="#3a1c13" stop-opacity="0.7"/><stop offset="0.5" stop-color="#3a1c13" stop-opacity="0.315"/><stop offset="1" stop-color="#3a1c13" stop-opacity="0"/></radialGradient>
<radialGradient id="pg18"><stop offset="0" stop-color="#2a130c" stop-opacity="0.9"/><stop offset="0.5" stop-color="#2a130c" stop-opacity="0.405"/><stop offset="1" stop-color="#2a130c" stop-opacity="0"/></radialGradient>
<radialGradient id="pg19"><stop offset="0" stop-color="#2a1510" stop-opacity="0.6"/><stop offset="0.5" stop-color="#2a1510" stop-opacity="0.27"/><stop offset="1" stop-color="#2a1510" stop-opacity="0"/></radialGradient>
<radialGradient id="pg20"><stop offset="0.35" stop-color="#0f0605" stop-opacity="1"/><stop offset="0.675" stop-color="#0f0605" stop-opacity="0.45"/><stop offset="1" stop-color="#0f0605" stop-opacity="0"/></radialGradient>
<radialGradient id="pg21"><stop offset="0.3" stop-color="#0f0605" stop-opacity="0.95"/><stop offset="0.65" stop-color="#0f0605" stop-opacity="0.4275"/><stop offset="1" stop-color="#0f0605" stop-opacity="0"/></radialGradient>
<radialGradient id="pg22"><stop offset="0.3" stop-color="#150906" stop-opacity="0.95"/><stop offset="0.65" stop-color="#150906" stop-opacity="0.4275"/><stop offset="1" stop-color="#150906" stop-opacity="0"/></radialGradient>
<radialGradient id="pg23"><stop offset="0.3" stop-color="#150906" stop-opacity="0.9"/><stop offset="0.65" stop-color="#150906" stop-opacity="0.405"/><stop offset="1" stop-color="#150906" stop-opacity="0"/></radialGradient>
<radialGradient id="pg24"><stop offset="0" stop-color="#6f9fb8" stop-opacity="0.8"/><stop offset="0.5" stop-color="#6f9fb8" stop-opacity="0.36"/><stop offset="1" stop-color="#6f9fb8" stop-opacity="0"/></radialGradient>
<radialGradient id="pg25"><stop offset="0.3" stop-color="#260e09" stop-opacity="0.95"/><stop offset="0.65" stop-color="#260e09" stop-opacity="0.4275"/><stop offset="1" stop-color="#260e09" stop-opacity="0"/></radialGradient>
<radialGradient id="pg26"><stop offset="0" stop-color="#a86151" stop-opacity="0.6"/><stop offset="0.5" stop-color="#a86151" stop-opacity="0.27"/><stop offset="1" stop-color="#a86151" stop-opacity="0"/></radialGradient>
</defs>
<rect width="572" height="326" fill="url(#pbg)"/>
<rect width="572" height="326" fill="url(#pvig)"/>
<rect x="0" y="160" width="572" height="46" fill="url(#pband)"/>
<rect x="0" y="206" width="572" height="6.600" fill="#86dde5" opacity=".85"/>
<ellipse cx="205" cy="168" rx="85" ry="60" fill="url(#pg1)"/>
<ellipse cx="212" cy="165" rx="40" ry="42" fill="url(#pg2)"/>
<ellipse cx="110" cy="175" rx="120" ry="45" fill="url(#pg3)"/>
<ellipse cx="456" cy="168" rx="60" ry="52" fill="url(#pg4)"/>
<ellipse cx="530" cy="180" rx="80" ry="36" fill="url(#pg5)"/>
<g fill="none" stroke="#4fb0c4" stroke-linecap="round" filter="url(#pb1)"><path d="M2 51L109 94" stroke-width="2.400" opacity=".3"/><path d="M2 98L127 127" stroke-width="2.600" opacity=".3"/><path d="M2 128L120 140" stroke-width="3" opacity=".2"/><path d="M571 52L449 101" stroke-width="2.400" opacity=".3"/><path d="M571 98L485 118" stroke-width="2.600" opacity=".3"/><path d="M571 130L470 140" stroke-width="3" opacity=".2"/><path d="M225 214L116 326" stroke-width="2.600" stroke="#3a97ab" opacity=".7"/><path d="M181 216L2 308" stroke-width="2.200" stroke="#2f7f95" opacity=".4"/><path d="M279 270V326" stroke-width="3.200" stroke="#3fa5b8" opacity=".85"/><path d="M0 288H330" stroke-width="1" stroke="#2c7588" opacity=".35"/><path d="M459 252L572 312" stroke-width="1.600" stroke="#3c8fa3" opacity=".6"/><path d="M440 215L572 262" stroke-width="1.400" stroke="#2c7c90" opacity=".4"/></g>
<g fill="none" stroke="#8fdce8" stroke-width=".9" opacity=".45" filter="url(#pb1)"><circle cx="214" cy="172" r="38"/><circle cx="92" cy="163" r="34" opacity=".5"/><circle cx="452" cy="166" r="30"/><path d="M56 140l32 -22 18 15 16 12 24 -14 16 12 22 -18 16 -12 12 -20M107 133l14 28 24 -2 12 14 22 -6 14 18M88 118l-10 30M190 126l14 30 26 -10M146 131l12 28M430 150l22 -28 24 22 -18 28 26 12M452 122l6 28"/></g>
<g fill="#9fe3ee" opacity=".6" filter="url(#pb1)"><circle cx="15" cy="57" r="2.6"/><circle cx="83" cy="84" r="2.4"/><circle cx="6" cy="99" r="2.2"/><circle cx="58" cy="111" r="2.2"/><circle cx="88" cy="120" r="2.4"/><circle cx="107" cy="133" r="3"/><circle cx="121" cy="145" r="4.2"/><circle cx="146" cy="130" r="3.2"/><circle cx="56" cy="140" r="2"/><circle cx="185" cy="120" r="3.4"/><circle cx="201" cy="100" r="2.6"/><circle cx="219" cy="89" r="2.8"/><circle cx="172" cy="139" r="3"/><circle cx="200" cy="140" r="3.6"/><circle cx="168" cy="156" r="2.4"/><circle cx="140" cy="152" r="2"/><circle cx="212" cy="186" r="3"/><circle cx="180" cy="196" r="2.4"/><circle cx="211" cy="221" r="2.8"/><circle cx="556" cy="57" r="2.6"/><circle cx="492" cy="84" r="2.4"/><circle cx="518" cy="111" r="2.2"/><circle cx="452" cy="105" r="2.2"/><circle cx="456" cy="121" r="3"/><circle cx="441" cy="135" r="3.4"/><circle cx="441" cy="148" r="4"/><circle cx="472" cy="129" r="2"/><circle cx="484" cy="153" r="2.6"/><circle cx="522" cy="136" r="2"/><circle cx="440" cy="184" r="3"/></g>
<g fill="none" stroke="#a9ebf3" stroke-width=".8" opacity=".5" filter="url(#pb1)"><path d="M208 199L205 188M208 199L219 183M208 199L186 194M183 192L186 194M183 192L175 191M183 192L166 182M198 160L201 159M198 160L195 156M198 160L189 152M246 171L236 167M246 171L234 162M246 171L219 183M205 188L204 175M205 188L219 183M236 167L234 162M236 167L216 159M222 143L226 147M222 143L208 136M222 143L216 159M195 156L201 159M195 156L189 152M179 139L188 131M179 139L170 148M179 139L189 152M169 163L179 167M169 163L170 148M169 163L166 182M201 159L189 152M208 136L198 130M208 136L197 129M226 147L216 159M226 147L234 162M198 130L197 129M198 130L188 131M197 129L188 131M175 191L186 194M175 191L166 182"/><path d="M438 147L435 159M438 147L450 158M438 147L456 136M467 137L456 136M467 137L459 153M467 137L461 154M456 136L459 153M456 136L461 154M479 169L473 166M479 169L488 165M479 169L482 156M482 156L488 165M482 156L473 166M467 159L461 154M467 159L473 166M467 159L459 153M442 168L435 159M442 168L450 158M435 159L450 158M452 194L450 158M459 153L461 154M459 153L450 158M461 154L450 158"/><path d="M96 165L82 159M96 165L90 150M96 165L94 182M144 187L144 166M144 187L148 161M144 187L121 173M148 161L144 166M148 161L129 154M129 154L118 145M129 154L144 166M90 150L90 142M90 150L82 159M112 136L118 145M112 136L90 142M118 145L90 142M82 159L90 142" opacity=".6"/></g>
<g fill="#c4f3f8" opacity=".7" filter="url(#pb1)"><circle cx="208" cy="199" r="1.6"/><circle cx="183" cy="192" r="2.3"/><circle cx="198" cy="160" r="3.0"/><circle cx="246" cy="171" r="1.6"/><circle cx="205" cy="188" r="2.3"/><circle cx="236" cy="167" r="3.0"/><circle cx="222" cy="143" r="1.6"/><circle cx="195" cy="156" r="2.3"/><circle cx="179" cy="139" r="3.0"/><circle cx="169" cy="163" r="1.6"/><circle cx="201" cy="159" r="2.3"/><circle cx="208" cy="136" r="3.0"/><circle cx="204" cy="175" r="1.6"/><circle cx="226" cy="147" r="2.3"/><circle cx="198" cy="130" r="3.0"/><circle cx="197" cy="129" r="1.6"/><circle cx="175" cy="191" r="2.3"/><circle cx="166" cy="182" r="3.0"/><circle cx="216" cy="159" r="1.6"/><circle cx="219" cy="183" r="2.3"/><circle cx="234" cy="162" r="3.0"/><circle cx="189" cy="152" r="1.6"/><circle cx="179" cy="167" r="2.3"/><circle cx="186" cy="194" r="3.0"/><circle cx="170" cy="148" r="1.6"/><circle cx="188" cy="131" r="2.3"/><circle cx="438" cy="147" r="3.0"/><circle cx="467" cy="137" r="1.6"/><circle cx="456" cy="136" r="2.3"/><circle cx="479" cy="169" r="3.0"/><circle cx="482" cy="156" r="1.6"/><circle cx="467" cy="159" r="2.3"/><circle cx="442" cy="168" r="3.0"/><circle cx="435" cy="159" r="1.6"/><circle cx="473" cy="166" r="2.3"/><circle cx="452" cy="194" r="3.0"/><circle cx="459" cy="153" r="1.6"/><circle cx="461" cy="154" r="2.3"/><circle cx="450" cy="158" r="3.0"/><circle cx="488" cy="165" r="1.6"/></g>
<path d="M280 258L304 272L327 308L331 326H572V312L459 252L443 239L427 208L425 163L420 150L385 160L376 182L356 210L328 243L298 262Z" fill="#03050b" filter="url(#pb1)"/>
<path d="M380 95L405 95L412 130L408 165L425 172L395 185L380 180Z" fill="#05060a" filter="url(#pb1)"/>
<g filter="url(#pb1)"><ellipse cx="417.500" cy="132" rx="21" ry="38" fill="url(#pear)" transform="rotate(6 417.500 132)"/><path d="M410 112C420 104 432 112 430 130C428 146 420 158 410 166" fill="none" stroke="#2a1510" stroke-width="5" opacity=".75"/></g>
<path filter="url(#pb1)" fill="url(#pskin)" d="M232 47L256 33L292 23L321 31L339 43L354 72L365 94L386 109L394 120L396 170L386 188L364 217L336 250L303 269L274 271L259 261L254 239L247 221L245 203L249 192L234 187L228 174L234 156L240 138L226 123L221 109L225 83Z"/>
<g clip-path="url(#pfc)">
<ellipse cx="404" cy="165" rx="46" ry="130" fill="url(#pg6)"/>
<ellipse cx="362" cy="262" rx="52" ry="34" fill="url(#pg7)"/>
<ellipse cx="340" cy="58" rx="22" ry="44" fill="url(#pg8)"/>
<ellipse cx="280" cy="54" rx="24" ry="30" fill="url(#pg9)"/>
<ellipse cx="322" cy="154" rx="34" ry="26" fill="url(#pg10)"/>
<ellipse cx="236" cy="168" rx="13" ry="18" fill="url(#pg11)"/>
<ellipse cx="270" cy="246" rx="22" ry="14" fill="url(#pg12)"/>
<ellipse cx="292" cy="114" rx="50" ry="22" fill="url(#pg13)"/>
<ellipse cx="232" cy="122" rx="14" ry="12" fill="url(#pg14)"/>
<ellipse cx="256" cy="158" rx="10" ry="28" fill="url(#pg15)"/>
<ellipse cx="306" cy="226" rx="56" ry="34" fill="url(#pg16)"/>
<ellipse cx="262" cy="236" rx="16" ry="7" fill="url(#pg17)"/>
<ellipse cx="256" cy="196" rx="20" ry="11" fill="url(#pg18)"/>
<ellipse cx="300" cy="268" rx="44" ry="12" fill="url(#pg19)"/>
<ellipse cx="291" cy="103" rx="40" ry="8" fill="url(#pg20)" transform="rotate(4 291 103)"/>
<ellipse cx="232" cy="110" rx="14" ry="6" fill="url(#pg21)" transform="rotate(-14 232 110)"/>
<ellipse cx="299" cy="122" rx="22" ry="8" fill="url(#pg22)"/>
<ellipse cx="233" cy="127" rx="10" ry="6" fill="url(#pg23)"/>
<ellipse cx="300" cy="121" rx="5" ry="3.5" fill="url(#pg24)"/>
<ellipse cx="269" cy="216" rx="27" ry="4.5" fill="url(#pg25)"/>
<ellipse cx="271" cy="226" rx="22" ry="7" fill="url(#pg26)"/>
</g>
<path filter="url(#pb1)" fill="#06070c" d="M218 22L223 7L241 0H419L433 22L441 47L442 98L433 95L415 95L401 105L394 121L386 109L365 95L354 73L339 44L321 31L292 23L256 33L234 46L220 38Z"/>
</svg></div>
<span class="t" style="left:375.93px;top:779px;font-size:14.4px;color:#3b3b40;letter-spacing:-0.134px;">Con solo unos clics, es posible obtener imágenes que destacan por su estilo y realismo.</span>
<span class="t" style="left:375.67px;top:799px;font-size:14.4px;color:#3b3b40;letter-spacing:-0.201px;">Herramientas como <b style="color:#1c1c1f">Media.io</b>, <b style="color:#1c1c1f" class="sq">Aragon</b> y <b style="color:#1c1c1f">HeadShotPro</b> simplifican el proceso, permitiendo a</span>
<span class="t" style="left:376.04px;top:819px;font-size:14.4px;color:#3b3b40;letter-spacing:-0.171px;">los usuarios crear retratos que mejoran su presencia en plataformas como LinkedIn. La</span>
<span class="t" style="left:376.63px;top:839px;font-size:14.4px;color:#3b3b40;letter-spacing:-0.164px;">facilidad de uso y la calidad de los resultados hacen que estas opciones sean ideales para</span>
<span class="t" style="left:1132.44px;top:836px;font-size:10.6px;color:#a9a9ae;letter-spacing:0.244px;">3740 words</span>
<div id="panelline" class="a"></div>
<div class="a" style="left:1231.500px;top:82.700px;width:354.500px;height:26.200px;border-radius:5px;border:1px solid #f0f0f2;background:#fff;box-shadow:0 1px 1.500px rgba(0,0,0,.03)"></div>
<span class="t" style="left:1240.00px;top:91px;font-size:12.6px;color:#27272a;letter-spacing:0.012px;-webkit-text-stroke:.25px #27272a;">mejores ia para retratos profesionales</span>
<svg style="left:1566px;top:91px" width="10" height="10" viewBox="0 0 20 20"><circle cx="10" cy="10" r="7.300" fill="none" stroke="#b9b9be" stroke-width="1.700"/><circle cx="10" cy="10" r="2.800" fill="none" stroke="#b9b9be" stroke-width="1.700"/><path d="M10 .500v2.500M10 17v2.500M.5 10H3M17 10h2.500M3.300 3.300L5 5M15 15l1.700 1.700M3.300 16.700L5 15M15 5l1.700-1.700" stroke="#b9b9be" stroke-width="1.700" stroke-linecap="round"/></svg>
<div class="a" style="left:1231.500px;top:121.600px;width:355.400px;height:22px;border-radius:5px;background:#f4f4f5"></div>
<div class="a" style="left:1409px;top:122.200px;width:88.500px;height:20.500px;border-radius:5px;background:#fff;box-shadow:0 1px 2px rgba(0,0,0,.10)"></div>
<span class="t" style="left:1261.85px;top:128px;font-size:10.2px;color:#77777d;letter-spacing:-0.382px;-webkit-text-stroke:.2px #77777d;">SERP</span>
<span class="t" style="left:1346.74px;top:127px;font-size:10.8px;color:#77777d;letter-spacing:0.025px;-webkit-text-stroke:.2px #77777d;">Outline</span>
<span class="t" style="left:1431.39px;top:127px;font-size:10.8px;color:#27272a;letter-spacing:0.126px;-webkit-text-stroke:.25px #27272a;">Optimize</span>
<span class="t" style="left:1520.00px;top:127px;font-size:10.8px;color:#77777d;letter-spacing:0.070px;-webkit-text-stroke:.2px #77777d;">Info Gain</span>
<div class="a" style="left:1592.500px;top:153px;width:4.700px;height:42px;border-radius:2.500px;background:#e1e1e3"></div>
<div class="a" style="left:1208px;top:149px;width:10px;height:1px;background:#e9e9eb"></div>
<span class="t" style="left:1231.28px;top:162px;font-size:11.2px;color:#27272a;font-weight:700;letter-spacing:-0.165px;">Topic Score</span>
<svg style="left:1298.200px;top:161.700px" width="10" height="10" viewBox="0 0 20 20"><circle cx="10" cy="10" r="8.700" fill="none" stroke="#b3b3b8" stroke-width="1.500"/><path d="M10 9v5.500" stroke="#b3b3b8" stroke-width="1.700" stroke-linecap="round"/><circle cx="10" cy="5.800" r="1.100" fill="#b3b3b8"/></svg>
<svg style="left:1350px;top:170px" width="120" height="70" viewBox="1350 170 120 70"><defs><linearGradient id="gg" gradientUnits="userSpaceOnUse" x1="1362" y1="0" x2="1436" y2="0"><stop offset="0" stop-color="#3dba90"/><stop offset=".55" stop-color="#2fae85"/><stop offset="1" stop-color="#17906a"/></linearGradient></defs><path d="M1361.700 229.800A47.300 47.300 0 011456.300 229.800" fill="none" stroke="#e4e4e6" stroke-width="11.200" stroke-linecap="round"/><path d="M1361.700 229.800A47.300 47.300 0 011430.500 187.700" fill="none" stroke="url(#gg)" stroke-width="11.200" stroke-linecap="round"/></svg>
<span class="t" style="left:1386.00px;top:212px;font-size:19.6px;color:#3f3f46;font-weight:700;transform-origin:0 0;transform:scaleX(1.1335);">65%</span>
<span class="t" style="left:1376.80px;top:244px;font-size:10.2px;color:#444449;letter-spacing:0.293px;-webkit-text-stroke:.25px #444449;">Avg Score 66</span>
<span class="t" style="left:1356.63px;top:262px;font-size:11.4px;color:#a9a9ae;letter-spacing:0.226px;">View competitors</span>
<svg style="left:1453px;top:263.500px" width="7.500" height="7" viewBox="0 0 15 14"><path d="M1 7h13M8.500 1.500L14 7l-5.500 5.500" fill="none" stroke="#b0b0b5" stroke-width="1.700" stroke-linecap="round" stroke-linejoin="round"/></svg>
<div class="vsep" style="left:1309.9px;top:290px;height:60px;background:#efeff0"></div>
<div class="vsep" style="left:1403.1px;top:290px;height:60px;background:#efeff0"></div>
<div class="vsep" style="left:1496.4px;top:290px;height:60px;background:#efeff0"></div>
<span class="t" style="left:1244.85px;top:294px;font-size:10px;color:#9b9ba1;letter-spacing:-0.052px;-webkit-text-stroke:.2px #9b9ba1;">WORDS</span>
<span class="t" style="left:1332.91px;top:294px;font-size:10px;color:#9b9ba1;letter-spacing:-0.081px;-webkit-text-stroke:.2px #9b9ba1;">HEADERS</span>
<span class="t" style="left:1435.00px;top:294px;font-size:10px;color:#9b9ba1;letter-spacing:0.378px;-webkit-text-stroke:.2px #9b9ba1;">LINKS</span>
<span class="t" style="left:1523.74px;top:294px;font-size:10px;color:#9b9ba1;letter-spacing:0.243px;-webkit-text-stroke:.2px #9b9ba1;">IMAGES</span>
<span class="t" style="left:1235.06px;top:312px;font-size:17.2px;color:#111113;font-weight:700;transform-origin:0 0;transform:scaleX(1.1070);">3740</span>
<span class="t" style="left:1337.87px;top:312px;font-size:17.2px;color:#111113;font-weight:700;transform-origin:0 0;transform:scaleX(1.1748);">44</span>
<span class="t" style="left:1436.90px;top:312px;font-size:17.2px;color:#111113;font-weight:700;transform-origin:0 0;transform:scaleX(1.1653);">4</span>
<span class="t" style="left:1533.80px;top:312px;font-size:17.2px;color:#111113;font-weight:700;transform-origin:0 0;transform:scaleX(0.9953);">10</span>
<svg style="left:1281.9px;top:315.2px" width="8" height="9.200" viewBox="0 0 8 9.200"><path d="M4 9V1.200M1 4L4 1l3 3" fill="none" stroke="#33b98a" stroke-width="1.300" stroke-linecap="round" stroke-linejoin="round"/></svg>
<svg style="left:1366px;top:315.2px" width="8" height="9.200" viewBox="0 0 8 9.200"><path d="M4 9V1.200M1 4L4 1l3 3" fill="none" stroke="#33b98a" stroke-width="1.300" stroke-linecap="round" stroke-linejoin="round"/></svg>
<svg style="left:1453.5px;top:315.6px" width="8" height="9.200" viewBox="0 0 8 9.200"><path d="M4 0v7.800M1 5l3 3 3-3" fill="none" stroke="#e3557c" stroke-width="1.300" stroke-linecap="round" stroke-linejoin="round"/></svg>
<span class="t" style="left:1251.63px;top:337px;font-size:10.2px;color:#a6a6ab;letter-spacing:0.552px;">1842</span>
<span class="t" style="left:1350.38px;top:337px;font-size:10.2px;color:#a6a6ab;">18</span>
<span class="t" style="left:1445.83px;top:337px;font-size:10.2px;color:#a6a6ab;transform-origin:0 0;transform:scaleX(0.9252);">11</span>
<span class="t" style="left:1536.82px;top:337px;font-size:10.2px;color:#a6a6ab;">10</span>
<svg style="left:1390px;top:298px" width="11" height="17" viewBox="0 0 11 17"><path d="M.7.800v12.700l3-2.800 2 4.600 1.900-.800-2-4.500h4.100z" fill="#fff" stroke="#1a1a1a" stroke-width="1" stroke-linejoin="round"/></svg>
<span class="t" style="left:1230.82px;top:370px;font-size:10.6px;color:#55555b;letter-spacing:0.260px;-webkit-text-stroke:.2px #55555b;">Type</span>
<span class="t" style="left:1321.74px;top:370px;font-size:10.6px;color:#55555b;letter-spacing:0.171px;-webkit-text-stroke:.2px #55555b;">Status</span>
<div class="btn" style="left:1231.600px;top:386.700px;width:77px;height:20px"></div>
<div class="btn" style="left:1322.800px;top:386.700px;width:43.700px;height:20px"></div>
<span class="t" style="left:1237.70px;top:392px;font-size:11.2px;color:#48484d;letter-spacing:0.351px;-webkit-text-stroke:.15px #48484d;">Long Tail</span>
<span class="t" style="left:1329.76px;top:392px;font-size:11.2px;color:#48484d;letter-spacing:0.270px;-webkit-text-stroke:.15px #48484d;">All</span>
<svg style="left:1292.5px;top:394.6px" width="7" height="4.500" viewBox="0 0 7 4.500"><path d="M.8.800l2.700 2.700L6.200.800" fill="none" stroke="#27272a" stroke-width="1.300" stroke-linecap="round" stroke-linejoin="round"/></svg>
<svg style="left:1350px;top:394.6px" width="7" height="4.500" viewBox="0 0 7 4.500"><path d="M.8.800l2.700 2.700L6.200.800" fill="none" stroke="#27272a" stroke-width="1.300" stroke-linecap="round" stroke-linejoin="round"/></svg>
<div class="btn" style="left:1468.500px;top:383.700px;width:89.300px;height:23.200px"></div>
<span class="t" style="left:1477.60px;top:389px;font-size:10.8px;color:#48484d;letter-spacing:0.077px;-webkit-text-stroke:.25px #48484d;">Explore Topics</span>
<svg style="left:1569.700px;top:393.500px" width="9" height="2.200" viewBox="0 0 9 2.200"><circle cx="1.100" cy="1.100" r=".950" fill="#a3a3a8"/><circle cx="4.500" cy="1.100" r=".950" fill="#a3a3a8"/><circle cx="7.900" cy="1.100" r=".950" fill="#a3a3a8"/></svg>
<div class="a" style="left:1231.500px;top:420.400px;width:355.400px;height:26px;border-radius:5px;border:1px solid #ededef;background:#f8f8f9"></div>
<svg style="left:1238.200px;top:429px" width="8.400" height="8.400" viewBox="0 0 12 12"><circle cx="5" cy="5" r="3.700" fill="none" stroke="#8d8d93" stroke-width="1.600"/><path d="M7.800 7.800L11 11" stroke="#8d8d93" stroke-width="1.600" stroke-linecap="round"/></svg>
<span class="t" style="left:1257.00px;top:428px;font-size:12px;color:#77777d;letter-spacing:0.288px;">Filter topics...</span>
<div class="card" style="top:461px"></div>
<div class="badge bg-g" style="top:468.2px"></div>
<span class="t" style="left:1247.95px;top:478px;font-size:10.4px;color:#1d8a63;font-weight:700;letter-spacing:0.022px;">16 / 4</span>
<span class="t" style="left:1292.09px;top:470px;font-size:11.4px;color:#27272a;letter-spacing:0.235px;-webkit-text-stroke:.25px #27272a;">alta calidad</span>
<span class="t" style="left:1291.70px;top:486px;font-size:10.4px;color:#a6a6ab;letter-spacing:0.089px;">19 sources</span>
<div class="bar" style="top:503.3px"><i style="width:100%;background:#0f9467"></i></div>
<div class="card" style="top:524.5px"></div>
<div class="badge bg-y" style="top:531.7px"></div>
<span class="t" style="left:1251.12px;top:541px;font-size:10.4px;color:#9a5a2c;font-weight:700;letter-spacing:0.409px;">4 / 6</span>
<span class="t" style="left:1291.77px;top:533px;font-size:11.4px;color:#27272a;letter-spacing:0.286px;-webkit-text-stroke:.25px #27272a;">inteligencia artificial</span>
<span class="t" style="left:1291.70px;top:550px;font-size:10.4px;color:#a6a6ab;letter-spacing:0.089px;">16 sources</span>
<div class="bar" style="top:566.8px"><i style="width:66.8%;background:#f5c542"></i></div>
<div class="card" style="top:588.1px"></div>
<div class="badge bg-g" style="top:595.3px"></div>
<span class="t" style="left:1250.79px;top:605px;font-size:10.4px;color:#1d8a63;font-weight:700;letter-spacing:0.268px;">7 / 2</span>
<span class="t" style="left:1291.70px;top:597px;font-size:11.4px;color:#27272a;letter-spacing:0.230px;-webkit-text-stroke:.25px #27272a;">retratos profesionales</span>
<span class="t" style="left:1291.70px;top:613px;font-size:10.4px;color:#a6a6ab;letter-spacing:0.070px;">12 sources</span>
<div class="bar" style="top:630.4px"><i style="width:100%;background:#0f9467"></i></div>
<div class="card" style="top:651.7px"></div>
<div class="badge bg-y" style="top:658.9px"></div>
<span class="t" style="left:1251.34px;top:669px;font-size:10.4px;color:#9a5a2c;font-weight:700;letter-spacing:-0.039px;">1 / 2</span>
<span class="t" style="left:1292.09px;top:661px;font-size:11.4px;color:#27272a;letter-spacing:0.107px;-webkit-text-stroke:.25px #27272a;">amplia gama</span>
<span class="t" style="left:1291.70px;top:677px;font-size:10.4px;color:#a6a6ab;letter-spacing:0.070px;">10 sources</span>
<div class="bar" style="top:694px"><i style="width:50.2%;background:#f5c542"></i></div>
<div class="card" style="top:715.3px"></div>
<div class="badge bg-n" style="top:722.5px"></div>
<span class="t" style="left:1250.44px;top:732px;font-size:10.4px;color:#3f3f46;font-weight:700;letter-spacing:0.564px;">0 / 2</span>
<span class="t" style="left:1292.32px;top:724px;font-size:11.4px;color:#27272a;letter-spacing:0.228px;-webkit-text-stroke:.25px #27272a;">fotos profesionales</span>
<span class="t" style="left:1292.08px;top:741px;font-size:10.4px;color:#a6a6ab;letter-spacing:0.266px;">9 sources</span>
<div class="bar" style="top:757.6px"></div>
<div class="card" style="top:778.9px"></div>
<div class="badge bg-g" style="top:786.1px"></div>
<span class="t" style="left:1250.58px;top:796px;font-size:10.4px;color:#1d8a63;font-weight:700;letter-spacing:0.405px;">4 / 4</span>
<span class="t" style="left:1292.09px;top:788px;font-size:11.4px;color:#27272a;letter-spacing:0.218px;-webkit-text-stroke:.25px #27272a;">generador de retratos</span>
<span class="t" style="left:1292.08px;top:804px;font-size:10.4px;color:#a6a6ab;letter-spacing:0.266px;">9 sources</span>
<div class="bar" style="top:821.2px"><i style="width:100%;background:#0f9467"></i></div>
<div class="card" style="top:842.5px"></div>
<div class="badge bg-n" style="top:849.7px"></div>
<span class="t" style="left:1291.39px;top:851px;font-size:11.4px;color:#27272a;letter-spacing:0.194px;-webkit-text-stroke:.25px #27272a;">mejores generadores</span>
<div id="taskbar" class="a"></div>
<svg style="left:15.500px;top:866px" width="24" height="24" viewBox="0 0 24 24"><path d="M2 10l9-4 6.500 12-12 5z" fill="#7a4fd6"/><path d="M.8 9.500L11 5l7 9-13 4z" fill="#d94fb0"/><rect x="9" y="8" width="10" height="9" rx="1" fill="#ef6a4a"/><path d="M4.500 13l5-3v6z" fill="#fff"/><path d="M11 12.500h6M11 15h6" stroke="#ffd9cf" stroke-width="1"/><circle cx="15.600" cy="5.500" r="6.300" fill="#d3261f"/></svg>
<span class="t" style="left:28.53px;top:868px;font-size:9px;color:#fff;font-weight:700;">4</span>
<span class="t" style="left:41.36px;top:870px;font-size:9px;color:#303338;letter-spacing:-0.091px;-webkit-text-stroke:.25px #303338;">URGENTE</span>
<span class="t" style="left:42.27px;top:882px;font-size:10.4px;color:#666a70;letter-spacing:-0.211px;">Alice Ferraz estr...</span>
<svg style="left:477.500px;top:870.600px" width="19.500" height="19.500" viewBox="0 0 20 20"><defs><linearGradient id="wl" x1="0" y1="0" x2="1" y2="1"><stop offset="0" stop-color="#3fc0f3"/><stop offset="1" stop-color="#0b68cf"/></linearGradient></defs><rect x="0" y="0" width="9.400" height="9.400" rx=".6" fill="url(#wl)"/><rect x="10.600" y="0" width="9.400" height="9.400" rx=".6" fill="#2a9de8"/><rect x="0" y="10.600" width="9.400" height="9.400" rx=".6" fill="#1f8fe2"/><rect x="10.600" y="10.600" width="9.400" height="9.400" rx=".6" fill="#0c6fd2"/></svg>
<div class="a" style="left:508.700px;top:867.500px;width:181px;height:25px;border-radius:12.500px;background:#f1f5fc;box-shadow:0 .5px 1px rgba(60,70,110,.18)"></div>
<svg style="left:517px;top:874.200px" width="12.500" height="12.500" viewBox="0 0 13 13"><circle cx="5.500" cy="5.500" r="4.300" fill="none" stroke="#25272c" stroke-width="1.700"/><path d="M8.700 8.700l3.300 3.300" stroke="#25272c" stroke-width="1.900" stroke-linecap="round"/></svg>
<span class="t" style="left:537.97px;top:875px;font-size:11.2px;color:#6b6d72;letter-spacing:0.048px;">Búsqueda</span>
<svg style="left:650px;top:872px" width="38" height="20" viewBox="0 0 38 20"><path d="M1 17C5 8 12 2 19 2c7 0 13 6 17 13.500L34 18H3z" fill="#a39579"/><path d="M6 13c4-6 9-9 13-9s9 3 12 8" fill="none" stroke="#6f6350" stroke-width="1.200" opacity=".7"/><path d="M10 15c3-5 6-7 9-7s6 2 8 6" fill="none" stroke="#c9bea6" stroke-width="1.200"/><path d="M0 17.500c6-2 12-2.500 19-2.500s13 .500 18 2.500c-3 2-9 2.500-18 2.500S3 19.500 0 17.500z" fill="#6b8a3c"/><path d="M9 16h19" stroke="#e9e4d6" stroke-width="1.300"/></svg>
<div class="a" style="left:706.500px;top:871.300px;width:13px;height:11.500px;background:#f1f3f6;border-radius:1px"></div>
<div class="a" style="left:700.600px;top:875.500px;width:15.500px;height:13.500px;background:#24282d;border-radius:1px"></div>
<div class="a" style="left:705.600px;top:875.500px;width:10.500px;height:9px;background:#c9cccf"></div>
<div class="a" style="left:738.300px;top:871px;width:18.500px;height:18px;border-radius:7px 5px 7px 5px;background:conic-gradient(from 0deg at 50% 50%,#2f7df2 0deg,#7a5ce8 55deg,#e24f8c 110deg,#f26a3a 170deg,#f3c73d 215deg,#3cc98f 270deg,#35b6e8 320deg,#2f7df2 360deg);transform:skewX(-8deg)"></div>
<div class="a" style="left:745px;top:875.500px;width:5.200px;height:9px;border-radius:2.500px;background:#eef1fa;transform:skewX(-16deg)"></div>
<svg style="left:773.700px;top:870.500px" width="21.500" height="18.500" viewBox="0 0 21.500 18.500"><path d="M1 2.500a1.500 1.500 0 011.500-1.500H8l2 2.500h9.500A1.500 1.500 0 0121 5v11.500a1.500 1.500 0 01-1.500 1.500h-17A1.500 1.500 0 011 16.500z" fill="#f6bf36"/><path d="M1 2.500a1.500 1.500 0 011.500-1.500H8l2 2.500H1z" fill="#e0a020"/><path d="M1 6h20v10.500a1.500 1.500 0 01-1.500 1.500h-17A1.500 1.500 0 011 16.500z" fill="#fbd04a"/><path d="M5 18v-3.500a1.500 1.500 0 011.500-1.500h9a1.500 1.500 0 011.500 1.500V18z" fill="#1f80d4"/></svg>
<svg style="left:810.500px;top:869.800px" width="21" height="20.500" viewBox="0 0 21 20.500"><defs><linearGradient id="ed1" x1="0" y1="0" x2="1" y2="0"><stop offset="0" stop-color="#1470c8"/><stop offset=".55" stop-color="#1d96d8"/><stop offset="1" stop-color="#4fd080"/></linearGradient></defs><circle cx="10.500" cy="10.250" r="10" fill="url(#ed1)"/><path d="M.6 11C1 5 5 1 10.500 .300 16 .300 20.500 4 20.500 9c0 2.500-2 4-4.500 4-2 0-3.500-.800-3.500-2 0-.800.700-1.300.7-2.500 0-1.800-1.700-3.200-4-3.200C5 5.300 1.500 7.500.6 11z" fill="#35c1f1" opacity=".55"/><path d="M3 14c0 3.500 3.500 6.300 8 6.300 2.500 0 4.800-.800 6.500-2.300-1.500.800-3.200 1-4.800.7C9.500 18 7.500 15.500 8 12.500 8.300 11 9.300 10 10.700 9.500 9 9 7 9.500 5.500 10.500 4 11.500 3 12.700 3 14z" fill="#0c59a4"/><circle cx="12" cy="10.500" r="2.300" fill="#eaf3fb"/></svg>
<div class="a" style="left:847.500px;top:870px;width:20.300px;height:20px;background:#0f7dd2"></div>
<div class="a" style="left:850.200px;top:872.500px;width:15px;height:15px;border-radius:8px;border:1.400px solid #fff"></div>
<span class="t" style="left:852.10px;top:879px;font-size:4.6px;color:#fff;font-weight:700;letter-spacing:-0.079px;">DELL</span>
<svg style="left:884px;top:870.500px" width="20" height="19.500" viewBox="0 0 20 19.500"><path d="M6 5V3.500A2.500 2.500 0 018.500 1h3A2.500 2.500 0 0114 3.500V5" fill="none" stroke="#3fb6ee" stroke-width="1.600"/><path d="M0 6a1.500 1.500 0 011.500-1.500h17A1.500 1.500 0 0120 6v9.500a4 4 0 01-4 4H4a4 4 0 01-4-4z" fill="#1b4f9e"/><rect x="6" y="8.500" width="3.500" height="3.500" fill="#f25022"/><rect x="10.500" y="8.500" width="3.500" height="3.500" fill="#7fba00"/><rect x="6" y="13" width="3.500" height="3.500" fill="#00a4ef"/><rect x="10.500" y="13" width="3.500" height="3.500" fill="#ffb900"/></svg>
<div class="a" style="left:915px;top:864.400px;width:32px;height:31.200px;border-radius:4px;background:#e9eef9;box-shadow:0 0 0 .5px rgba(255,255,255,.6)"></div>
<div class="a" style="left:921px;top:869.700px;width:20.500px;height:20.500px;border-radius:11px;background:conic-gradient(from 60deg,#fbc116 0 120deg,#2ba24c 120deg 240deg,#e33b2e 240deg 360deg)"></div>
<div class="a" style="left:926.300px;top:875px;width:10px;height:10px;border-radius:5px;background:#fff"></div>
<div class="a" style="left:927.400px;top:876.100px;width:7.800px;height:7.800px;border-radius:4px;background:#4285f4"></div>
<div class="a" style="left:925px;top:893.700px;width:12px;height:1.800px;border-radius:1px;background:#5a64b8"></div>
<div class="a" style="left:958.700px;top:871.300px;width:17.500px;height:17.500px;border-radius:9px;background:#17171a"></div>
<svg style="left:961.500px;top:874px" width="12" height="12" viewBox="0 0 12 12"><circle cx="6" cy="6" r="4.600" fill="none" stroke="#8c8c90" stroke-width=".9"/><path d="M6 1.500c1.500 1.500 1.500 3 0 4.500M10 8c-2 .500-3.500-.300-4-1.500M2 8.500C3 6.500 4.500 6 6 6" fill="none" stroke="#c9c9cc" stroke-width="1"/></svg>
<div class="a" style="left:970.600px;top:866.900px;width:9.600px;height:9.600px;border-radius:5px;background:#f20d12"></div>
<div class="a" style="left:965.400px;top:894px;width:4.600px;height:1.500px;border-radius:1px;background:#8a8fa0"></div>
<svg style="left:993.800px;top:869.600px" width="20.500" height="20.500" viewBox="0 0 20.500 20.500"><path d="M10.500 1.200a9 9 0 00-7.700 13.600L1.300 19.300l4.700-1.400a9 9 0 104.500-16.700z" fill="#f2fbf5" stroke="#1ea652" stroke-width="1.900" stroke-linejoin="round"/><path d="M7.300 5.800c-.6 0-1.300.8-1.300 2 0 3 3.500 6.600 6.700 6.600 1 0 1.900-.6 2-1.400l-2-1.200-1 .900c-1.300-.500-2.500-1.700-3-3l.9-1z" fill="#1ea652"/></svg>
<div class="a" style="left:1031px;top:869.700px;width:19.700px;height:20.300px;border-radius:4px;background:#1e3242"></div>
<svg style="left:1035px;top:872.500px" width="12" height="15" viewBox="0 0 12 15"><path d="M4.500 0L7 2.500 4.500 5 2 2.500z" fill="#f2fffb"/><path d="M7 3.500L10 6.500 4 12.500 1 9.500z" fill="#55dcc0"/><path d="M3.500 13.500h5" stroke="#e6f3f0" stroke-width="1.200"/></svg>
<svg style="left:1067px;top:869.800px" width="21" height="18.500" viewBox="0 0 21 18.500"><path d="M3 12V9.500a7.500 7.500 0 0115 0V12" fill="none" stroke="#1a2fd2" stroke-width="2.200"/><rect x=".5" y="9" width="5" height="8.500" rx="2.400" fill="#1a2fd2"/><rect x="15.500" y="9" width="5" height="8.500" rx="2.400" fill="#1a2fd2"/><ellipse cx="10.500" cy="12" rx="4.600" ry="5" fill="#f7c21a"/><ellipse cx="10.500" cy="12.500" rx="5" ry="2.600" fill="#f0661a"/><rect x="5.500" y="12" width="10" height="1.200" fill="#d81e1e"/></svg>
<div class="a" style="left:1104px;top:869.700px;width:20px;height:20.300px;background:#0d0f14"></div>
<svg style="left:1106px;top:871.500px" width="16" height="17" viewBox="0 0 16 17"><g stroke="#9a9ca3" stroke-width="1.400"><path d="M2 2v13M6 1v15M10 1v15M14 2v13"/></g><rect x=".8" y="8.500" width="2.400" height="2" fill="#2d7ff0"/><rect x="4.800" y="4.500" width="2.400" height="2" fill="#d03a8a"/><rect x="8.800" y="9.500" width="2.400" height="2" fill="#34c9b0"/><rect x="12.800" y="6" width="2.400" height="2" fill="#8f3fd0"/></svg>
<svg style="left:1389px;top:877.500px" width="9" height="5.500" viewBox="0 0 9 5.500"><path d="M.8 4.700L4.500 1l3.700 3.700" fill="none" stroke="#3a3d45" stroke-width="1.300" stroke-linecap="round" stroke-linejoin="round"/></svg>
<svg style="left:1413px;top:874px" width="14.500" height="12" viewBox="0 0 14.500 12"><path d="M4 10.500h6.500a3 3 0 00.500-6 4 4 0 00-7.500-.800A3.500 3.500 0 004 10.500z" fill="none" stroke="#3a3d45" stroke-width="1.300" stroke-linejoin="round"/><path d="M1.500 1l11.500 10.500" stroke="#3a3d45" stroke-width="1.300" stroke-linecap="round"/></svg>
<svg style="left:1441.500px;top:872.800px" width="10" height="13.500" viewBox="0 0 10 13.500"><rect x="3" y=".6" width="4" height="7.500" rx="2" fill="none" stroke="#7c86a6" stroke-width="1.100"/><path d="M.8 6.500a4.200 4.200 0 008.400 0M5 10.800v2.200" fill="none" stroke="#7c86a6" stroke-width="1.100" stroke-linecap="round"/></svg>
<span class="t" style="left:1469.89px;top:871px;font-size:8.4px;color:#40434a;letter-spacing:0.019px;">ESP</span>
<span class="t" style="left:1472.89px;top:884px;font-size:8.4px;color:#40434a;letter-spacing:-0.039px;">ES</span>
<svg style="left:1503px;top:874.800px" width="14" height="10" viewBox="0 0 14 10"><path d="M.8 3.500a9 9 0 0112.400 0M2.800 5.700a6 6 0 018.400 0M4.800 7.700a3.200 3.200 0 014.400 0" fill="none" stroke="#3a3d45" stroke-width="1.100" stroke-linecap="round"/><circle cx="7" cy="9" r=".9" fill="#3a3d45"/></svg>
<svg style="left:1523px;top:874.300px" width="14" height="11" viewBox="0 0 14 11"><path d="M1 4h2l3-2.800v8.600L3 7H1z" fill="none" stroke="#3a3d45" stroke-width="1" stroke-linejoin="round"/><path d="M8 3.500a3 3 0 010 4M9.800 2a5.300 5.300 0 010 7M11.600 .600a7.500 7.500 0 010 9.800" fill="none" stroke="#3a3d45" stroke-width="1" stroke-linecap="round"/></svg>
<svg style="left:1543px;top:873.800px" width="14" height="12.500" viewBox="0 0 14 12.500"><path d="M2 4h9l2 5.500H0z" fill="#2a2d34"/><path d="M3 1v3M1.500 2.500L3 1l1.500 1.500" fill="none" stroke="#2a2d34" stroke-width="1"/><path d="M8 9c.8-1.300 2.500-1 2.500.3 0 1-1.500 2-2.500 2.700-1-.700-2.500-1.700-2.500-2.700C5.500 8 7.200 7.700 8 9z" fill="#2a2d34" stroke="#dfe7f5" stroke-width=".5"/></svg>
<svg style="left:1571px;top:874.200px" width="11.500" height="12.500" viewBox="0 0 11.500 12.500"><path d="M5.750 .5a4 4 0 00-4 4v3L.5 9.800h10.500L9.750 7.500v-3a4 4 0 00-4-4z" fill="#3c40a0"/><path d="M4.200 11a1.600 1.600 0 003.100 0z" fill="#3c40a0"/></svg>
</div>
</body>
</html>
